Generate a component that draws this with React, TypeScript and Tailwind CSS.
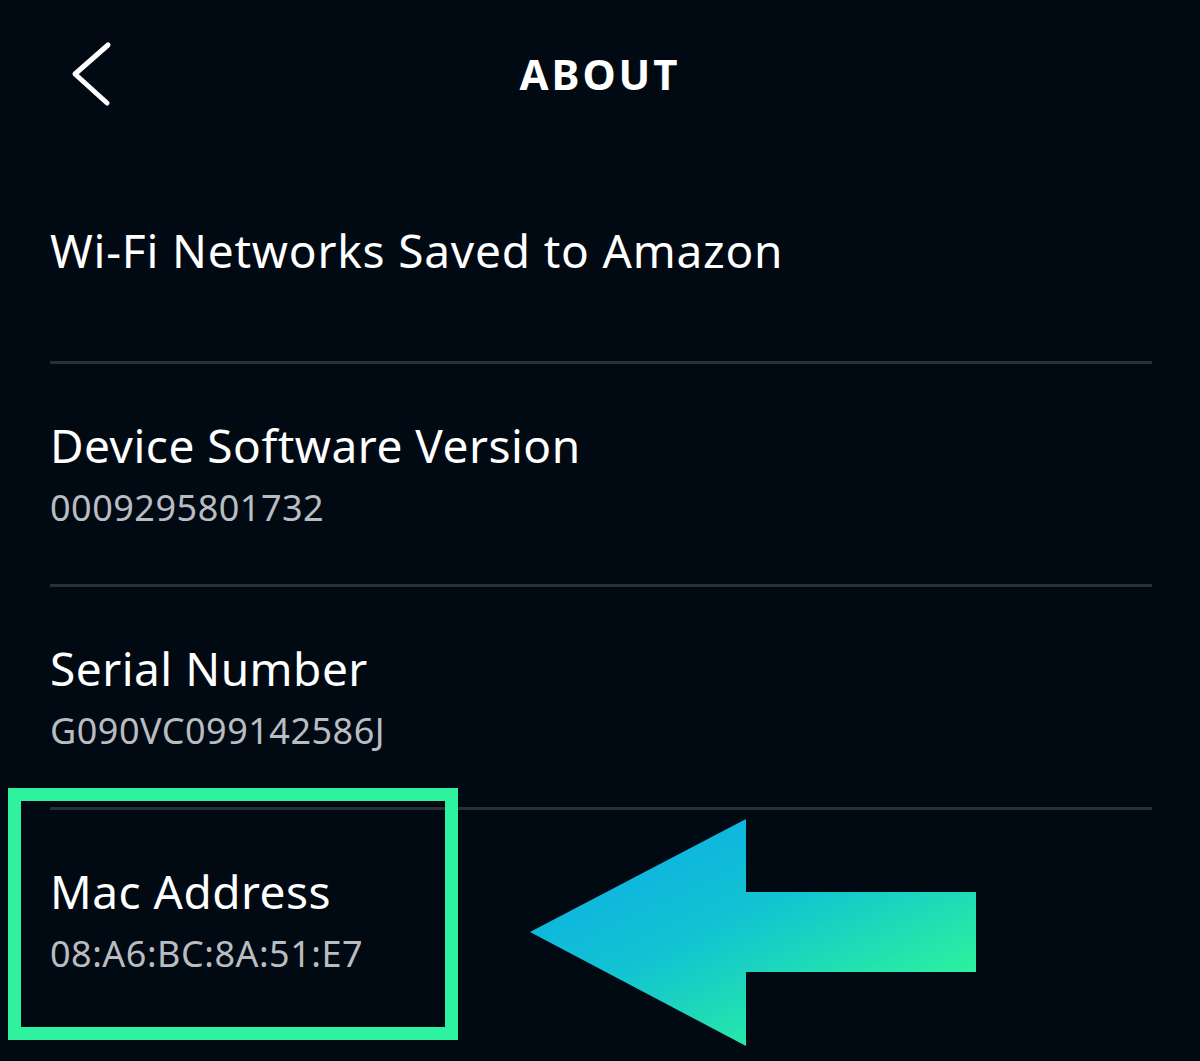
import React from "react";

type Row = { title: string; value?: string };

const rows: Row[] = [
  { title: "Device Software Version", value: "0009295801732" },
  { title: "Serial Number", value: "G090VC099142586J" },
  { title: "Mac Address", value: "08:A6:BC:8A:51:E7" },
];

function Divider() {
  return <div className="ml-[50px] mr-[48px] h-[3px] bg-[#2a2f37]" />;
}

export default function App() {
  return (
    <div
      className="relative h-[1061px] w-full overflow-hidden bg-[#010a13] text-white"
      style={{ fontFamily: '"Noto Sans", "Open Sans", sans-serif' }}
    >
      {/* header */}
      <div className="relative flex h-[150px] items-center justify-center">
        <button className="absolute left-[70px] top-[40px] flex h-[68px] w-[46px] items-center justify-center">
          <svg width="46" height="68" viewBox="0 0 46 68" fill="none">
            <polyline
              points="38,5 5,34 37,63"
              stroke="white"
              strokeWidth="5"
              strokeLinecap="round"
              strokeLinejoin="round"
            />
          </svg>
        </button>
        <h1 className="pb-[2px] text-[42px] font-bold leading-none tracking-[3px]">ABOUT</h1>
      </div>

      {/* list */}
      <div className="flex h-[211px] items-center px-[50px] pb-[11px]">
        <span className="text-[46px] leading-none tracking-[0.8px]">Wi-Fi Networks Saved to Amazon</span>
      </div>
      <Divider />
      {rows.map((r, i) => (
        <div key={r.title}>
          <div className="flex h-[220px] flex-col justify-center px-[50px]">
            <span className="text-[46px] leading-none tracking-[0.5px]">{r.title}</span>
            <span className="mt-[22px] text-[36px] leading-none tracking-[0.5px] text-[#b9bdc2]">
              {r.value}
            </span>
          </div>
          {i < rows.length - 1 && <Divider />}
        </div>
      ))}

      {/* highlight annotation */}
      <div className="absolute left-[8px] top-[788px] h-[252px] w-[450px] border-[13px] border-[#2ef2a0]" />
      <svg
        className="absolute left-[520px] top-[810px]"
        width="470"
        height="245"
        viewBox="0 0 470 245"
      >
        <defs>
          <linearGradient id="arrowGrad" x1="0.25" y1="0" x2="0.95" y2="0.75">
            <stop offset="0" stopColor="#0db0e3" />
            <stop offset="0.45" stopColor="#12c3d2" />
            <stop offset="1" stopColor="#2ef49a" />
          </linearGradient>
        </defs>
        <polygon
          points="10,122 226,9 226,82 456,82 456,162 226,162 226,236"
          fill="url(#arrowGrad)"
        />
      </svg>
    </div>
  );
}
